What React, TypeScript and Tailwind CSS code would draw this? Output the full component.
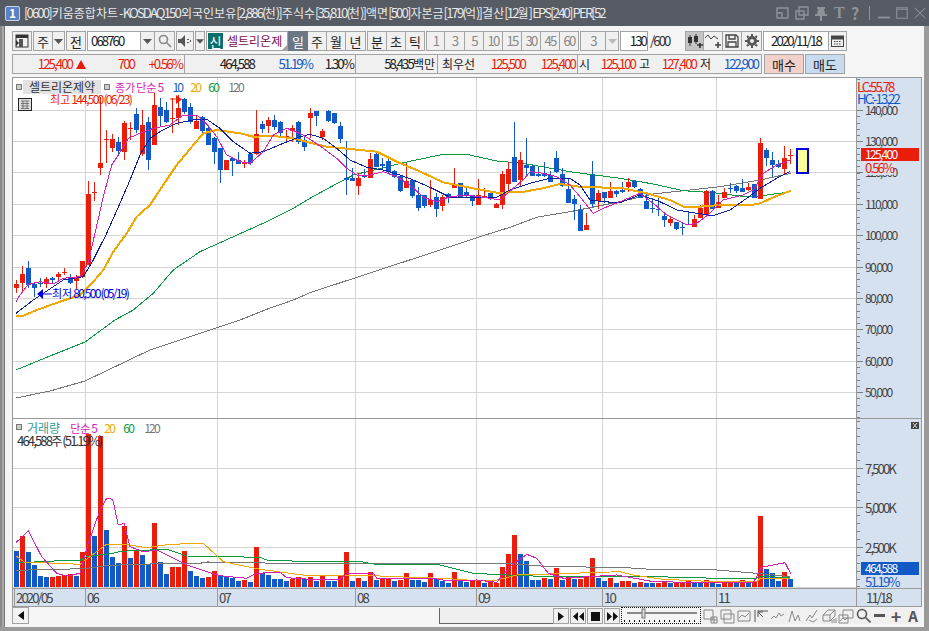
import React from "react";

const RED = "#ea1c0a";
const BLUE = "#1259c8";

type C = [number, number, number, number, number];
const groupA: C[] = [
[540,552,565,578,0],[498,522,548,572,0],[483,505,555,565,1],[545,552,563,590,1],[535,548,553,560,1],[530,537,552,563,0],[530,535,540,553,1],[517,522,532,540,0],[503,515,517,525,0],[522,530,548,552,1],
[525,533,544,568,0],[483,483,530,533,0],[243,282,495,495,0],[247,276,278,303,0],[-10,190,203,225,0],[90,117,119,188,0],[102,117,144,155,0],[112,127,152,168,1],[63,68,155,180,0],[65,85,87,120,0],
[25,42,90,100,1],[30,75,162,168,0],[50,67,180,210,1],[-20,15,135,135,0],[-5,22,47,80,1],[5,30,65,70,1],[-6,55,57,98,0],[-15,25,53,75,0],[-6,-3,35,42,1],[10,22,65,72,1],
[45,63,87,87,0],[48,52,92,105,1],[78,85,135,135,1],[110,115,155,192,1],[145,145,210,248,1],[180,181,210,210,0],[175,175,183,228,1],[155,180,192,192,1],[180,189,192,203,0],[155,162,188,195,1],
[30,102,162,165,0],[62,72,87,100,1],[52,60,78,100,0],[45,60,80,90,1],[62,67,98,115,1],[90,107,113,125,0],[75,85,92,125,0],[62,67,125,132,1],[105,120,142,152,1]];
const groupB: C[] = [
[-5,10,25,85,0],[2,3,18,48,1],[57,63,80,90,0],[0,3,32,35,1],[8,9,38,42,1],[35,48,87,100,1],[93,204,211,255,1],[175,204,212,212,1],[190,205,227,255,0],[178,194,202,205,1],
[128,147,204,205,0],[130,132,170,172,1],[145,162,167,180,1],[145,153,185,188,1],[180,183,201,205,1],[195,198,242,245,1],[160,213,233,235,0],[208,210,258,265,1],[232,255,294,303,1],[255,255,288,295,1],
[210,270,285,292,0],[250,262,296,320,1],[255,262,288,302,0],[250,253,261,280,1],[175,225,234,235,0],[220,220,262,262,1],[232,247,255,265,1],[255,255,273,288,1],[208,255,285,285,0],[235,257,260,262,0],
[248,250,264,270,1],[278,283,294,294,0],[182,192,284,297,0],[155,178,221,245,0],[37,142,215,215,1],[127,150,210,230,0],[85,165,173,195,1],[165,167,197,198,1],[172,192,197,200,1],[156,188,197,200,1],
[183,195,215,215,1],[124,145,187,190,1],[175,193,228,230,1],[208,237,278,280,1],[255,267,282,330,1],[285,300,362,362,1],[310,345,360,360,0],[153,195,282,292,1],[240,250,272,298,0],[247,247,265,278,1],
[216,244,263,265,0],[240,243,253,260,1]];
const groupC: C[] = [
[215,240,246,250,1],[205,216,232,245,0],[210,213,232,235,1],[235,238,263,265,1],[250,273,296,297,1],[265,294,298,310,1],[265,298,301,318,1],[305,318,330,352,1],[318,327,338,347,0],[336,336,358,360,1],
[340,350,355,375,1],[305,341,343,345,1],[315,328,352,352,0],[285,293,323,325,0],[240,243,311,312,0],[240,243,297,297,1],[255,277,293,294,0],[233,246,264,265,0],[220,234,237,250,1],[225,228,243,250,1],
[208,233,245,247,1],[220,232,241,242,0],[222,222,263,265,1],[85,98,267,268,0],[115,120,143,168,1],[126,150,164,200,1],[150,162,172,175,1],[108,144,176,195,0],[118,135,138,162,0]];

const candles = [
  ...groupA.map((c) => c.slice(0, 4).map((v) => 100 + v / 3).concat(c[4])),
  ...groupB.map((c) => c.slice(0, 4).map((v) => 110 + v / 3).concat(c[4])),
  ...groupC.map((c) => c.slice(0, 4).map((v) => 110 + v / 3).concat(c[4])),
];

const volA = [[423,1],[378,0],[426,1],[465,1],[498,1],[501,1],[501,0],[498,0],[495,0],[492,0],[498,1],[426,0],[72,0],[378,1],[78,0],[360,1],[441,1],[459,1],[348,0],[444,1],[420,0],[435,1],[462,1],[339,0],[456,1],[492,1],[471,0],[471,0],[423,0],[483,1],[498,1],[504,1],[501,0],[483,0],[495,1],[501,1],[504,1],[513,1],[510,0],[516,1],[411,0],[489,1],[495,1],[507,1],[507,1],[513,1],[507,0],[501,0],[507,1]];
const volB = [[201,0],[213,1],[195,0],[213,1],[213,1],[198,0],[126,0],[213,1],[204,0],[213,1],[186,0],[210,1],[204,0],[204,0],[213,1],[210,0],[189,0],[210,1],[210,1],[216,1],[189,0],[207,1],[213,1],[219,1],[186,0],[213,1],[216,1],[210,0],[210,0],[219,1],[216,0],[219,0],[171,0],[132,0],[75,0],[132,1],[153,1],[210,1],[210,1],[204,0],[207,1],[174,0],[210,1],[201,0],[207,1],[207,0],[201,0],[144,0],[204,1],[213,1],[204,0],[219,1]];
const volC = [[513,0],[513,0],[519,1],[516,0],[519,1],[519,1],[520,0],[516,0],[520,1],[520,0],[520,0],[513,0],[519,1],[519,1],[510,0],[519,1],[522,1],[519,0],[513,0],[519,1],[510,0],[519,1],[516,0],[318,0],[477,1],[489,1],[513,1],[486,0],[507,1]];
const vols = [
  ...volA.map(([v, c]) => [410 + v / 3, c]),
  ...volB.map(([v, c]) => [510 + v / 3, c]),
  ...volC.map(([v, c]) => [410 + v / 3, c]),
];

const seg = (pts: number[][], dx: number, dy: number) => pts.map(([x, y]) => `${(dx + x / 3).toFixed(1)},${(dy + y / 3).toFixed(1)}`).join(" ");

const ma5 = [seg([[48,605],[60,585],[85,553],[120,545],[160,552],[190,535],[240,530],[264,490],[285,400],[310,290],[335,195],[355,165],[385,115],[420,100],[460,85],[510,75],[550,45],[590,45],[620,72],[650,110],[680,165],[720,185],[750,190],[790,155],[820,105],[860,85],[900,100],[930,118]],0,100),
 seg([[40,115],[80,145],[110,175],[140,195],[180,195],[220,185],[260,200],[300,225],[340,262],[380,275],[420,260],[470,255],[520,262],[570,270],[610,235],[640,210],[660,185],[700,190],[740,200],[780,225],[810,260],[850,310],[880,295],[930,275]],310,110),
 seg([[60,250],[100,280],[140,315],[200,345],[230,340],[270,310],[310,270],[370,255],[400,240],[430,190],[470,165],[510,150]],620,110)].join(" ");
const ma10 = [seg([[48,640],[100,600],[130,580],[190,540],[250,530],[280,480],[320,400],[360,310],[390,240],[420,165],[450,115],[480,95],[530,70],[580,60],[620,58],[660,85],[700,125],[750,160],[790,155],[850,130],[900,110],[930,103]],0,100),
 seg([[40,85],[80,115],[120,150],[170,172],[220,180],[270,195],[310,210],[360,232],[420,262],[500,262],[560,262],[600,240],[660,220],[720,205],[780,205],[810,225],[840,270],[880,275],[930,278]],310,110),
 seg([[60,255],[120,275],[170,300],[230,310],[280,317],[330,300],[380,265],[420,235],[470,205],[510,185]],620,110)].join(" ");
const ma20 = [seg([[48,648],[70,647],[110,630],[180,605],[240,585],[280,545],[310,510],[340,455],[380,400],[410,350],[450,315],[490,255],[530,195],[580,135],[610,100],[650,90],[720,100],[760,110],[820,108],[880,115],[930,128]],0,100),
 seg([[50,110],[120,117],[200,125],[260,155],[320,180],[400,217],[480,233],[560,248],[630,247],[700,235],[750,222],[820,232],[930,233]],310,110),
 seg([[80,250],[150,270],[190,290],[240,290],[300,285],[390,286],[420,280],[470,258],[513,242]],620,110)].join(" ");
const ma60 = ["16,370 50,356 85,342 " + seg([[345,660],[400,630],[460,580],[520,510],[600,455],[700,410],[800,365],[880,325],[930,295]],0,100),
 seg([[60,232],[130,195],[200,178],[280,158],[400,133],[470,133],[560,153],[640,160],[780,185],[930,205]],310,110),
 seg([[100,222],[190,242],[280,248],[360,258],[420,258],[513,245]],620,110)].join(" ");
const ma120 = ["16,398 50,391 85,381 150,350 " + seg([[720,660],[800,628],[880,600],[930,578]],0,100),
 seg([[390,420],[500,383],[600,352],[680,322],[780,305],[930,275]],310,110),
 seg([[100,252],[190,242],[300,230],[420,210],[513,190]],620,110)].join(" ");

const vm5 = [seg([[48,398],[85,362],[125,440],[170,490],[200,498],[240,490],[265,400],[300,300],[320,265],[338,268],[355,345],[372,340],[390,410],[430,425],[470,420],[520,445],[560,465],[620,485],[660,497],[740,505],[770,490],[840,487],[860,503],[930,508]],0,410),
 seg([[90,208],[110,190],[190,190],[200,205],[370,205],[410,212],[500,210],[560,217],[600,170],[650,133],[680,145],[715,190],[760,205],[920,195]],310,510),
 seg([[100,515],[290,518],[400,518],[425,472],[495,458],[513,492]],620,410)].join(" ");
const vm20 = [seg([[48,438],[75,458],[130,458],[240,463],[270,440],[320,402],[370,402],[440,413],[510,403],[610,400],[670,455],[780,478],[870,490],[930,498]],0,410),
 seg([[190,197],[300,202],[400,205],[470,210],[560,210],[620,195],[720,192],[930,185]],310,510),
 seg([[40,495],[130,508],[290,515],[410,515],[420,505],[511,505]],620,410)].join(" ");
const vm60 = [seg([[48,457],[160,455],[165,451],[240,451],[260,440],[340,430],[360,424],[500,418],[560,438],[680,440],[780,442],[800,450],[930,455]],0,410),
 seg([[155,155],[190,162],[390,165],[490,190],[570,194],[720,200],[930,200]],310,510),
 seg([[110,500],[290,505],[410,505],[420,500],[511,502]],620,410)].join(" ");
const vm120 = [seg([[48,481],[250,476],[330,466],[450,462],[600,460],[620,456],[780,457],[800,460],[930,460]],0,410),
 seg([[590,160],[720,170],[930,172]],310,510),
 seg([[90,478],[290,480],[410,490],[511,500]],620,410)].join(" ");

const vGrid = [85, 217, 355, 476, 602, 716];
const pGrid = [110, 141, 172, 204, 235, 267, 298, 329, 361, 392];
const vGridH = [468, 507, 547];
const priceLabels = [["140,000",110],["130,000",141],["120,000",172],["110,000",204],["100,000",235],["90,000",267],["80,000",298],["70,000",329],["60,000",361],["50,000",392]] as [string, number][];
const volLabels = [["7,500K",468],["5,000K",507],["2,500K",547]] as [string, number][];
const dates = [["2020/05",14],["06",85],["07",217],["08",355],["09",476],["10",602],["11",716]] as [string, number][];

// Text in the narrow half-width manner of the reference: every Latin cell is half as wide as a Hangul cell.
function T({ t }: { t: string }) {
  const runs = t.match(/[\x00-\x7f]+|[^\x00-\x7f]+/g) || [];
  return (
    <span className="whitespace-pre">
      {runs.map((r, i) =>
        r.charCodeAt(0) < 128 ? (
          <span key={i} className="font-['Liberation_Mono'] text-[1.1em] tracking-[-0.145em]">{r}</span>
        ) : (
          <span key={i}>{r}</span>
        )
      )}
    </span>
  );
}

function Btn({ className = "", children }: { className?: string; children?: React.ReactNode }) {
  const h = className.includes("h-[") ? "" : "h-[20px] ";
  const bg = className.includes("bg-[") ? "" : "bg-[#f0f0f0] ";
  const col = className.includes("text-[#") ? "" : "text-[#222] ";
  const size = className.includes("text-[1") ? "" : "text-[13px] ";
  const bd = className.includes("border-[#") ? "" : "border-[#a3a3a3] ";
  return (
    <div className={"flex shrink-0 items-center justify-center border " + h + bg + col + size + bd + className}>
      {children}
    </div>
  );
}

const Arrow = ({ color = "#555" }: { color?: string }) => (
  <svg width="9" height="5" viewBox="0 0 9 5"><path d="M0 0h9L4.500 5z" fill={color} /></svg>
);

function Glyph({ d, w = 16, h = 16, stroke = "#a4a7ac", fill = "none", sw = 1.4 }: { d: string; w?: number; h?: number; stroke?: string; fill?: string; sw?: number }) {
  return (
    <svg width={w} height={h} viewBox="0 0 16 16" fill={fill} stroke={stroke} strokeWidth={sw}>
      <path d={d} />
    </svg>
  );
}

function PricePlot() {
  return (
    <svg className="block" width="843" height="340" viewBox="13 78 843 340">
      <g stroke="#d4d4d4" strokeWidth="1" shapeRendering="crispEdges">
        {vGrid.map((x) => <line key={x} x1={x + 0.5} x2={x + 0.5} y1={78} y2={418} />)}
        {pGrid.map((y) => <line key={y} x1={13} x2={856} y1={y + 0.5} y2={y + 0.5} />)}
      </g>
      <g fill="none" shapeRendering="crispEdges">
        <polyline points={ma120} stroke="#777" strokeWidth="1" />
        <polyline points={ma60} stroke="#0a9a3f" strokeWidth="1" />
      </g>
      <g shapeRendering="crispEdges">
        {candles.map((c, i) => {
          const col = c[4] ? BLUE : RED;
          const x = 16 + 6 * i;
          return (
            <g key={i} fill={col}>
              <rect x={x} y={Math.round(c[0])} width="1" height={Math.max(1, Math.round(c[3]) - Math.round(c[0]))} />
              <rect x={x - 2} y={Math.round(c[1])} width="5" height={Math.max(1, Math.round(c[2]) - Math.round(c[1]))} />
            </g>
          );
        })}
      </g>
      <g fill="none" shapeRendering="crispEdges">
        <polyline points={ma20} stroke="#f0a800" strokeWidth="2" />
        <polyline points={ma10} stroke="#0b1fa0" strokeWidth="1" />
        <polyline points={ma5} stroke="#d81fb5" strokeWidth="1" />
      </g>
      <rect x="797" y="149" width="11" height="24" fill="#ffff99" stroke="#0000e0" strokeWidth="2" />
      <path d="M170 99h7" stroke={RED} />
      <path d="M176 95l6 4.500-6 4.500z" fill={RED} />
      <path d="M43 289v10l-6-5z" fill="#0000e0" />
      <path d="M43 294h9" stroke="#0000e0" />
    </svg>
  );
}

function VolumePlot() {
  return (
    <svg className="block" width="843" height="169" viewBox="13 419 843 169">
      <g stroke="#d4d4d4" shapeRendering="crispEdges">
        {vGrid.map((x) => <line key={x} x1={x + 0.5} x2={x + 0.5} y1={419} y2={588} />)}
        {vGridH.map((y) => <line key={y} x1={13} x2={856} y1={y + 0.5} y2={y + 0.5} />)}
        <line x1={13} x2={856} y1={587.5} y2={587.5} />
      </g>
      <g shapeRendering="crispEdges">
        {vols.map((v, i) => (
          <rect key={i} x={14 + 6 * i} y={Math.round(v[0])} width="5" height={587 - Math.round(v[0])} fill={v[1] ? BLUE : RED} />
        ))}
      </g>
      <g fill="none" shapeRendering="crispEdges">
        <polyline points={vm120} stroke="#777" />
        <polyline points={vm60} stroke="#0a9a3f" />
        <polyline points={vm20} stroke="#f0a800" />
        <polyline points={vm5} stroke="#d81fb5" />
      </g>
    </svg>
  );
}

function AxisTicks({ y0, h, major, step }: { y0: number; h: number; major: number[]; step: number }) {
  const minor: number[] = [];
  for (let y = major[0] - step * 40; y < y0 + h; y += step) if (y > y0) minor.push(y);
  return (
    <svg className="absolute left-0 top-0" width="10" height={h} viewBox={`0 ${y0} 10 ${h}`}>
      <g stroke="#808080" shapeRendering="crispEdges">
        {minor.map((y, i) => <line key={i} x1={0} x2={3} y1={Math.round(y) + 0.5} y2={Math.round(y) + 0.5} />)}
        {major.map((y) => <line key={y} x1={0} x2={6} y1={y + 0.5} y2={y + 0.5} />)}
      </g>
    </svg>
  );
}

export default function App() {
  return (
    <div
      className="flex h-[631px] w-[929px] flex-col overflow-hidden bg-[#f5f5f5] text-[12px] leading-none text-[#222]"
      style={{ fontFamily: '"Noto Sans CJK KR","Liberation Sans",sans-serif' }}
    >
      {/* title bar */}
      <div className="flex h-[26px] shrink-0 items-center bg-[#565b64] pl-[5px] text-[#e9e9e9]">
        <div className="flex h-[15px] w-[15px] shrink-0 items-center justify-center rounded-[2px] border border-[#c8d4ee] bg-[#5b80c4] text-[12px] font-bold text-white">1</div>
        <div className="ml-[4px] w-[744px] shrink-0 overflow-hidden whitespace-nowrap text-[12px]">
          <T t="[0600] 키움종합차트 - KOSDAQ150 외국인보유[2,886(천)] 주식수[35,810(천)] 액면[500] 자본금[179(억)] 결산[12월] EPS[240] PER[52" />
        </div>
        <div className="ml-[7px] flex items-center gap-[3px]">
          <Glyph stroke="#8f9299" d="M2 3h11v10H2zM2 8h5v5" />
          <Glyph stroke="#8f9299" d="M5 2h9v8H5zM2 6h8v8H2z" />
          <Glyph stroke="none" fill="#8f9299" d="M4 2h8v2h-1l1 5h2v2H9v5H7v-5H2V9h2l1-5H4z" />
          <span className="ml-[2px] w-[12px] text-[16px] font-bold text-[#8f9299]" style={{ fontFamily: '"Liberation Serif",serif' }}>T</span>
          <span className="ml-[2px] w-[12px] text-[16px] font-bold text-[#8f9299]">?</span>
          <span className="ml-[3px] h-[14px] w-px bg-[#8f9299]" />
          <span className="ml-[5px] flex items-center gap-[6px]">
            <Glyph w={12} h={12} stroke="#8f9299" d="M0 14h16" sw={2.500} />
            <Glyph w={12} h={12} stroke="#8f9299" d="M1 1h14v14H1zM1 3h14" />
            <Glyph w={12} h={12} stroke="#8f9299" d="M1 1l14 14M15 1L1 15" />
          </span>
        </div>
      </div>

      <div className="flex min-h-0 flex-1">
        <div className="flex w-[5px] shrink-0">
          <div className="w-[2px] bg-[#8a8a8a]" />
          <div className="w-[2px] bg-[#a8a8a8]" />
          <div className="w-[1px] bg-[#777]" />
        </div>
        <div className="flex min-w-0 flex-1 flex-col pl-[7px] pr-[2px] pt-[5px]">
          {/* toolbar 1 */}
          <div className="flex h-[20px] shrink-0 items-center">
            <Btn className="w-[20px]">
              <svg width="14" height="14" viewBox="0 0 14 14"><rect x="1" y="1" width="12" height="12" fill="none" stroke="#333" /><rect x="1" y="1" width="12" height="3" fill="#333" /><rect x="4" y="5" width="4" height="8" fill="#555" /><path d="M4 9l-3-3v6z" fill="#333" /></svg>
            </Btn>
            <Btn className="ml-[1px] w-[20px]">주</Btn>
            <Btn className="w-[12px] border-l-0"><Arrow /></Btn>
            <Btn className="ml-[1px] w-[20px]">전</Btn>
            <div className="ml-[1px] flex h-[20px] w-[54px] shrink-0 items-center border border-[#a3a3a3] bg-white pl-[3px] text-[12px]"><T t="068760" /></div>
            <Btn className="w-[14px] border-l-0"><Arrow /></Btn>
            <Btn className="w-[20px] border-l-0">
              <svg width="14" height="14" viewBox="0 0 14 14" fill="none" stroke="#888" strokeWidth="1.600"><circle cx="5.500" cy="5.500" r="4" /><path d="M8.500 8.500l4.500 4.500" /></svg>
            </Btn>
            <Btn className="ml-[1px] w-[18px]">
              <svg width="14" height="12" viewBox="0 0 14 12"><path d="M0 4h3l4-4v12l-4-4H0z" fill="#555" /><path d="M9 4h2v1H9zM9 7h2v1H9zM12 5h1v2h-1z" fill="#555" /></svg>
            </Btn>
            <Btn className="ml-[1px] w-[10px]"><Arrow /></Btn>
            <div className="relative ml-[1px] flex h-[20px] w-[82px] shrink-0 items-center border border-[#a3a3a3] bg-white pl-[1px]">
              <span className="flex h-[16px] w-[15px] items-center justify-center bg-[#0d6e67] text-[13px] text-white">신</span>
              <span className="ml-[4px] text-[12px] text-[#7a0f4b]">셀트리온제</span>
              <svg className="absolute bottom-0 right-0" width="5" height="5" viewBox="0 0 5 5"><path d="M5 0v5H0z" fill="#a3a3a3" /></svg>
            </div>
            <Btn className="w-[20px] border-[#6b7785] bg-[#6b7785] text-[#fff]">일</Btn>
            <Btn className="w-[19px] border-l-0">주</Btn>
            <Btn className="w-[19px] border-l-0">월</Btn>
            <Btn className="w-[20px] border-l-0">년</Btn>
            <Btn className="ml-[1px] w-[20px]">분</Btn>
            <Btn className="w-[19px] border-l-0">초</Btn>
            <Btn className="w-[19px] border-l-0">틱</Btn>
            <div className="ml-[1px] flex">
              <Btn className="w-[19px] text-[12px] text-[#888]"><T t="1" /></Btn>
              <Btn className="w-[20px] border-l-0 text-[12px] text-[#888]"><T t="3" /></Btn>
              <Btn className="w-[19px] border-l-0 text-[12px] text-[#888]"><T t="5" /></Btn>
              <Btn className="w-[19px] border-l-0 text-[12px] text-[#888]"><T t="10" /></Btn>
              <Btn className="w-[19px] border-l-0 text-[12px] text-[#888]"><T t="15" /></Btn>
              <Btn className="w-[19px] border-l-0 text-[12px] text-[#888]"><T t="30" /></Btn>
              <Btn className="w-[19px] border-l-0 text-[12px] text-[#888]"><T t="45" /></Btn>
              <Btn className="w-[19px] border-l-0 text-[12px] text-[#888]"><T t="60" /></Btn>
            </div>
            <Btn className="ml-[1px] w-[26px] text-[12px] text-[#888]"><T t="3" /></Btn>
            <Btn className="w-[13px] border-l-0"><Arrow color="#bbb" /></Btn>
            <div className="ml-[1px] flex h-[20px] w-[28px] shrink-0 items-center justify-end border border-[#a3a3a3] bg-white pr-[1px] text-[12px]"><T t="130" /></div>
            <span className="ml-[2px] w-[35px] shrink-0 text-[12px] text-[#333]"><T t="/600" /></span>
            <Btn className="w-[19px] bg-[#c4c4c4]">
              <svg width="16" height="14" viewBox="0 0 16 14"><path d="M3 1v11M9 0v10" stroke="#333" /><rect x="1" y="3" width="4" height="6" fill="#333" /><rect x="7" y="2" width="4" height="6" fill="#333" /><path d="M10 11h6M13 9v5" stroke="#333" strokeWidth="1.600" /></svg>
            </Btn>
            <Btn className="w-[19px] border-l-0">
              <svg width="16" height="14" viewBox="0 0 16 14" fill="none" stroke="#444"><path d="M0 4l3-3 3 4 3-3 4 3" /><path d="M10 11h6M13 8v6" strokeWidth="1.600" /></svg>
            </Btn>
            <Btn className="w-[19px] border-l-0">
              <svg width="14" height="14" viewBox="0 0 14 14" fill="none" stroke="#444" strokeWidth="1.300"><path d="M1 1h10l2 2v10H1z" /><path d="M4 1v4h6V1M3 13V8h8v5" /></svg>
            </Btn>
            <Btn className="w-[20px] border-l-0">
              <svg width="14" height="14" viewBox="0 0 14 14" fill="none" stroke="#555" strokeWidth="3"><circle cx="7" cy="7" r="3.500" /><path d="M7 0v2M7 12v2M0 7h2M12 7h2M2 2l1.500 1.500M10.500 10.500L12 12M12 2l-1.500 1.500M3.500 10.500L2 12" strokeWidth="2" /></svg>
            </Btn>
            <div className="ml-[1px] flex h-[20px] w-[66px] shrink-0 items-center justify-center border border-[#a3a3a3] bg-white text-[12px]"><T t="2020/11/18" /></div>
            <Btn className="w-[18px] border-l-0">
              <svg width="13" height="12" viewBox="0 0 13 12" fill="none" stroke="#444"><rect x=".5" y="1.500" width="12" height="10" /><rect x="0" y="1" width="13" height="3" fill="#444" /><path d="M3 6.500h7M3 9h7" strokeDasharray="1.500 1" /></svg>
            </Btn>
          </div>

          {/* toolbar 2 */}
          <div className="mt-[3px] flex h-[20px] shrink-0">
            <div className="flex w-[750px] shrink-0 items-center whitespace-nowrap border border-[#a3a3a3] bg-[#f0f0f0] text-[12px]">
              <span className="w-[59px] text-right text-[#ea1c0a]"><T t="125,400" /></span>
              <svg className="ml-[4px]" width="10" height="9" viewBox="0 0 10 9"><path d="M5 0l5 9H0z" fill="#ea1c0a" /></svg>
              <span className="w-[48px] text-right text-[#ea1c0a]"><T t="700" /></span>
              <span className="w-[48px] text-right text-[#ea1c0a]"><T t="+0.56%" /></span>
              <span className="ml-[2px] h-full w-px bg-[#a3a3a3]" />
              <span className="w-[69px] text-right"><T t="464,588" /></span>
              <span className="w-[58px] text-right text-[#1259c8]"><T t="51.19%" /></span>
              <span className="w-[41px] text-right"><T t="1.30%" /></span>
              <span className="ml-[2px] h-full w-px bg-[#a3a3a3]" />
              <span className="w-[79px] text-right"><T t="58,435백만" /></span>
              <span className="ml-[2px] h-full w-px bg-[#a3a3a3]" />
              <span className="w-[37px] text-right">최우선</span>
              <span className="w-[50px] text-right text-[#ea1c0a]"><T t="125,500" /></span>
              <span className="w-[50px] text-right text-[#ea1c0a]"><T t="125,400" /></span>
              <span className="ml-[2px] h-full w-px bg-[#a3a3a3]" />
              <span className="w-[12px] text-right">시</span>
              <span className="w-[45px] text-right text-[#ea1c0a]"><T t="125,100" /></span>
              <span className="w-[15px] text-right">고</span>
              <span className="w-[46px] text-right text-[#ea1c0a]"><T t="127,400" /></span>
              <span className="w-[15px] text-right">저</span>
              <span className="w-[47px] text-right text-[#1259c8]"><T t="122,900" /></span>
            </div>
            <div className="ml-[2px] flex w-[40px] items-center justify-center border border-[#a3a3a3] bg-[#f4d0ca] text-[13px]">매수</div>
            <div className="ml-[1px] flex w-[40px] items-center justify-center border border-[#a3a3a3] bg-[#c8dcf0] text-[13px]">매도</div>
          </div>

          {/* chart */}
          <div className="mt-[3px] flex h-[530px] w-[910px] shrink-0 flex-col border border-[#999] bg-white">
            <div className="flex h-[340px] shrink-0">
              <div className="relative w-[843px] shrink-0 overflow-hidden">
                <PricePlot />
                <span className="absolute left-[3px] top-[6px] h-[6px] w-[6px] border border-[#777] bg-[#ccc]" />
                <span className="absolute left-[10px] top-[2px] flex h-[14px] w-[78px] items-center justify-center bg-[#e2e2e2] text-[12px] text-[#333]">셀트리온제약</span>
                <span className="absolute left-[91px] top-[6px] h-[6px] w-[6px] border border-[#777] bg-[#ccc]" />
                <div className="absolute left-[102px] top-[2px] flex h-[14px] items-center text-[11px]">
                  <span className="text-[#d81fb5]"><T t="종가 단순 5" /></span>
                  <span className="ml-[10px] text-[#1259c8]"><T t="10" /></span>
                  <span className="ml-[8px] text-[#f0a800]"><T t="20" /></span>
                  <span className="ml-[8px] text-[#0a9a3f]"><T t="60" /></span>
                  <span className="ml-[10px] text-[#777]"><T t="120" /></span>
                </div>
                <svg className="absolute left-[5px] top-[20px]" width="14" height="13" viewBox="0 0 14 13" fill="#ddd" stroke="#222"><rect x=".5" y=".5" width="13" height="12" /><path d="M3 3h8M3 5.500h8M3 8h8M3 10.500h8M5 3v8M9 3v8" stroke="#777" /></svg>
                <span className="absolute left-[37px] top-[15px] whitespace-nowrap text-[11px] text-[#ea1c0a]"><T t="최고 144,500 (06/23)" /></span>
                <span className="absolute left-[39px] top-[209px] whitespace-nowrap text-[11px] text-[#0000e0]"><T t="최저 80,500 (05/19)" /></span>
              </div>
              <div className="relative flex-1 border-l border-[#999] bg-[#d6e1ef]">
                <AxisTicks y0={78} h={340} major={pGrid} step={6.27} />
                {priceLabels.map(([t, y]) => (
                  <span key={t} className="absolute left-[8px] text-[11px] text-[#444]" style={{ top: y - 78 - 6 }}><T t={t} /></span>
                ))}
                <span className="absolute left-0 top-[2px] bg-[#d6e1ef] text-[12px] text-[#ea1c0a]"><T t="LC:55,78" /></span>
                <span className="absolute left-0 top-[14px] bg-[#d6e1ef] text-[12px] text-[#1259c8]"><T t="HC:-13,22" /></span>
                <span className="absolute left-[4px] top-[70px] flex h-[13px] w-[58px] items-center bg-[#ea1c0a] pl-[4px] text-[11px] text-white"><T t="125,400" /></span>
                <span className="absolute left-[8px] top-[83px] bg-[#d6e1ef] pb-[1px] text-[12px] text-[#ea1c0a]"><T t="0.56%" /></span>
              </div>
            </div>
            <div className="flex h-[170px] shrink-0 border-t border-[#999]">
              <div className="relative w-[843px] shrink-0 overflow-hidden">
                <VolumePlot />
                <span className="absolute left-[3px] top-[5px] h-[6px] w-[6px] border border-[#777] bg-[#ccc]" />
                <div className="absolute left-[14px] top-[3px] flex items-center text-[11px]">
                  <span className="text-[12px] text-[#2f9b9b]">거래량</span>
                  <span className="ml-[10px] text-[#d81fb5]"><T t="단순 5" /></span>
                  <span className="ml-[8px] text-[#f0a800]"><T t="20" /></span>
                  <span className="ml-[9px] text-[#0a9a3f]"><T t="60" /></span>
                  <span className="ml-[11px] text-[#777]"><T t="120" /></span>
                </div>
                <span className="absolute left-[4px] top-[15px] whitespace-nowrap text-[12px] text-[#333]"><T t="464,588주(51.19%)" /></span>
              </div>
              <div className="relative flex-1 border-l border-[#999] bg-[#d6e1ef]">
                <AxisTicks y0={419} h={169} major={vGridH} step={7.9} />
                {volLabels.map(([t, y]) => (
                  <span key={t} className="absolute left-[8px] text-[12px] text-[#444]" style={{ top: y - 419 - 6 }}><T t={t} /></span>
                ))}
                <span className="absolute left-[54px] top-[3px] flex h-[7px] w-[8px] items-center justify-center bg-[#444]">
                  <svg width="6" height="5" viewBox="0 0 6 5" stroke="#fff" strokeWidth=".8"><path d="M1 0l4 5M5 0L1 5" /></svg>
                </span>
                <span className="absolute left-[4px] top-[143px] flex h-[13px] w-[58px] items-center bg-[#1259c8] pl-[4px] text-[11px] text-white"><T t="464,588" /></span>
                <span className="absolute left-[8px] top-[156px] text-[12px] text-[#1259c8]"><T t="51.19%" /></span>
              </div>
            </div>
            <div className="relative flex-1 border-t border-[#999] bg-[#d6e1ef] text-[12px] text-[#444]">
              {dates.map(([t, x]) => (
                <span key={t} className="absolute top-0 flex h-full items-center border-l border-[#999] pl-[1px]" style={{ left: x - 13 }}><T t={t} /></span>
              ))}
              <span className="absolute left-[843px] top-0 flex h-full items-center border-l border-[#999] pl-[9px]"><T t="11/18" /></span>
            </div>
          </div>

          {/* scroll + tools */}
          <div className="flex h-[20px] shrink-0">
            <Btn className="h-[17px] w-[17px] bg-[#f2f2f2]">
              <svg width="6" height="9" viewBox="0 0 6 9"><path d="M6 0v9L0 4.500z" fill="#111" /></svg>
            </Btn>
            <div className="h-[17px] w-[410px] shrink-0 bg-[#f6f6f6]" />
            <div className="mt-[1px] h-[16px] w-[114px] shrink-0 border-b border-l border-[#666] bg-[#efefef]" />
            <Btn className="mt-[1px] h-[16px] w-[16px]"><svg width="6" height="9" viewBox="0 0 6 9"><path d="M0 0v9l6-4.500z" fill="#111" /></svg></Btn>
            <Btn className="ml-[1px] mt-[1px] h-[16px] w-[16px]"><svg width="11" height="9" viewBox="0 0 11 9"><path d="M5 0v9L0 4.500zM11 0v9L6 4.500z" fill="#111" /></svg></Btn>
            <Btn className="ml-[1px] mt-[1px] h-[16px] w-[16px]"><svg width="9" height="9" viewBox="0 0 9 9"><rect width="9" height="9" fill="#111" /></svg></Btn>
            <Btn className="ml-[1px] mt-[1px] h-[16px] w-[16px]"><svg width="11" height="9" viewBox="0 0 11 9"><path d="M0 0v9l5-4.500zM6 0v9l5-4.500z" fill="#111" /></svg></Btn>
            <div className="relative ml-[1px] h-[17px] w-[80px] shrink-0 border border-dotted border-[#111]">
              <svg className="absolute left-0 top-0" width="78" height="15" viewBox="0 0 78 15">
                <path d="M5 5h70" stroke="#888" strokeWidth="2" />
                <rect x="20" y="1" width="3" height="9" fill="#ddd" stroke="#777" />
                <path d="M2 13h74" stroke="#111" strokeDasharray="1 4" strokeWidth="2" />
              </svg>
            </div>
            <div className="flex h-[17px] items-center bg-[#f0f0f0]">
              {[
                "M2 2h9v9H2zM9 9h6v6H9zM12 9v6M9 12h6",
                "M2 2h10v9H2zM5 6h10v9H5z",
                "M2 3h12v10H2zM3 10l3-3 3 2 4-4",
                "M2 14V2M4 3h11M5 4l5 5M5 4v5M5 4h5",
                "M1 11l3-3 2 2 3-5 2 3 3-2",
                "M2 14l3-11 3 10 3-6 2 6",
                "M2 13l4-6 2 3 5-8M5 12l4 2 4-3",
                "M2 7l5-5h7v6l-5 5H2zM2 7h7v6M9 7l5-5M11 12v3M13 11v4M15 10v5",
                "M5 2h10v8H5zM1 7h9v8H1zM2 13l3-3 2 2 3-3",
              ].map((d, i) => (
                <span key={i} className="flex h-[17px] w-[17px] items-center justify-center">
                  <Glyph d={d} stroke={i === 3 ? "#555" : "#888"} sw={1} />
                </span>
              ))}
              <span className="flex h-[17px] w-[18px] items-center justify-center">
                <svg width="15" height="15" viewBox="0 0 15 15" fill="none" stroke="#555" strokeWidth="1.600"><circle cx="6" cy="6" r="4.500" /><path d="M9.500 9.500l5 5" /></svg>
              </span>
              <span className="ml-[2px] h-[3px] w-[11px] bg-[#555]" />
              <span className="ml-[5px] w-[12px] text-center text-[18px] font-bold text-[#555]">+</span>
              <span className="ml-[5px] w-[12px] text-center text-[15px] font-bold text-[#555]">A</span>
            </div>
          </div>
        </div>
        <div className="w-[5px] shrink-0 bg-[#9a9a9a]" />
      </div>
      <div className="h-[4px] shrink-0 bg-[#9a9a9a]" />
    </div>
  );
}
